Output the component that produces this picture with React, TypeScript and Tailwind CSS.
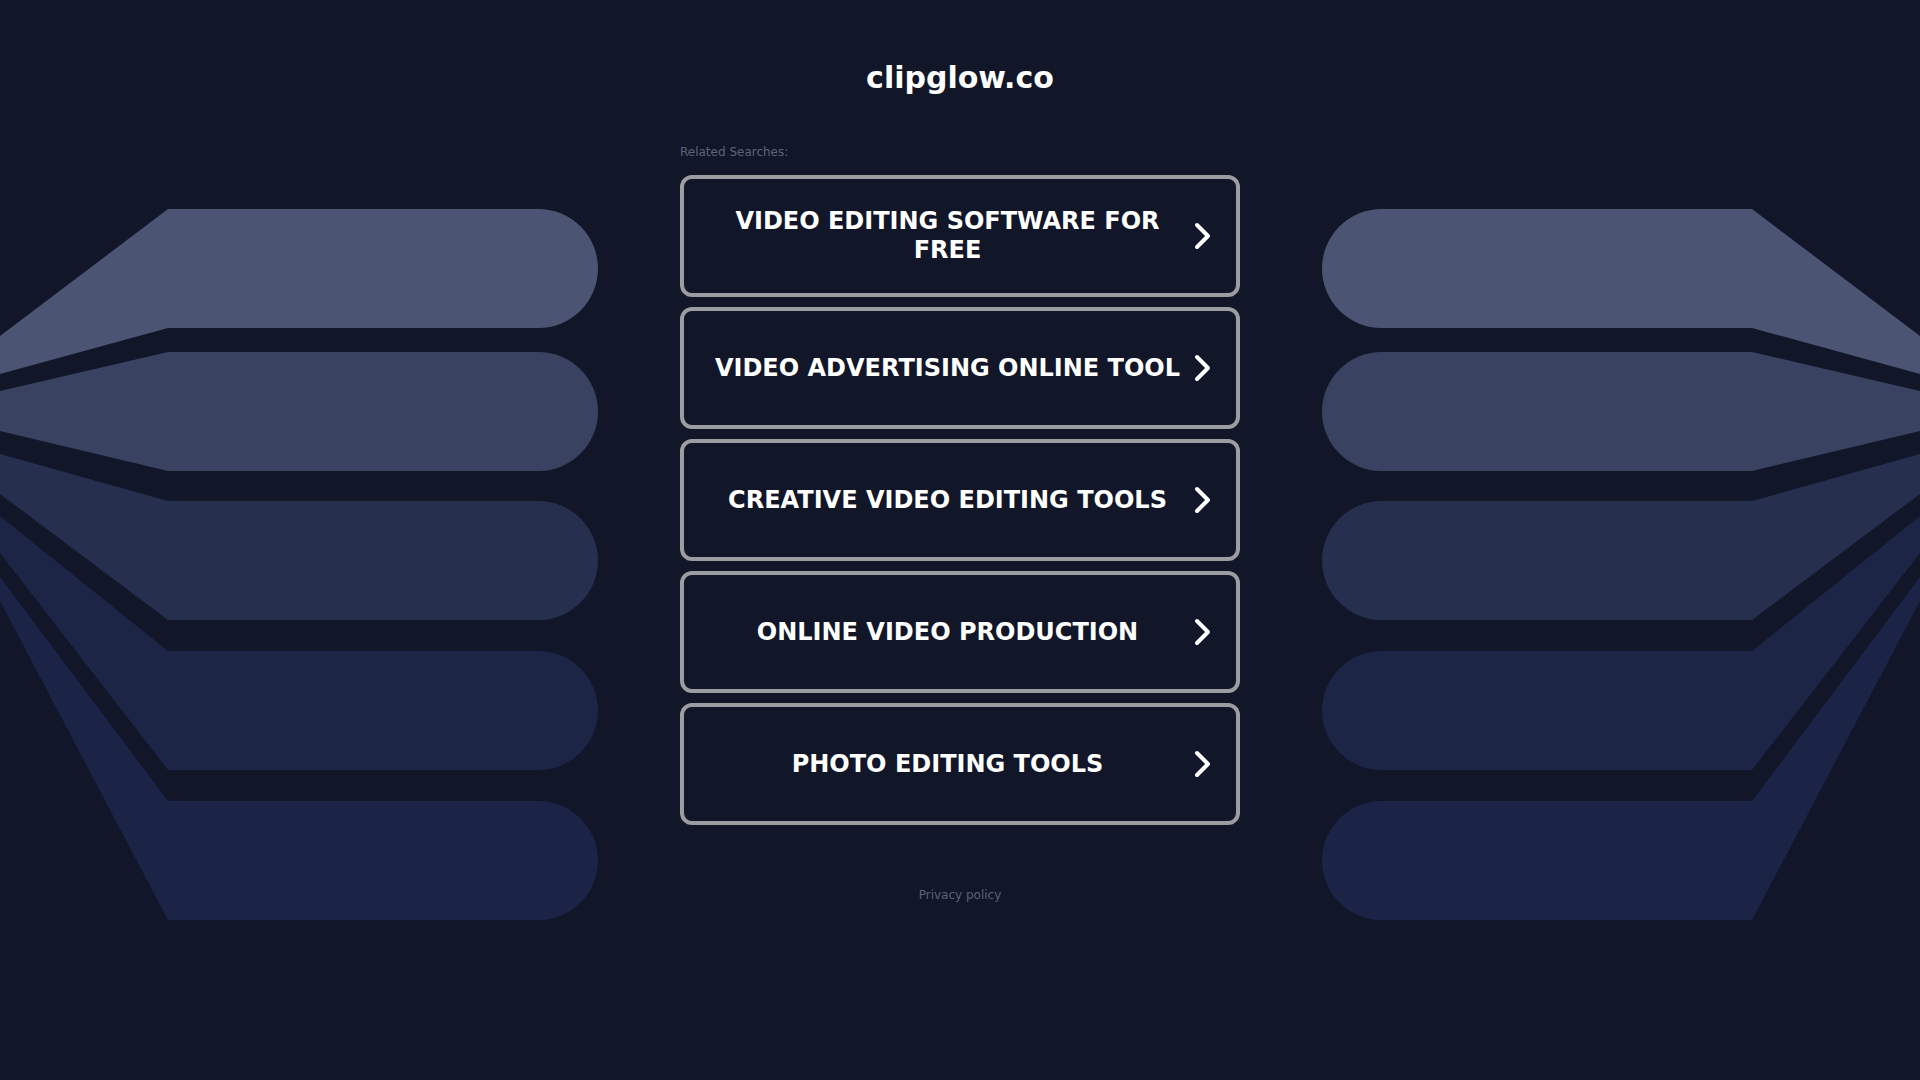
const searches = [
  "VIDEO EDITING SOFTWARE FOR FREE",
  "VIDEO ADVERTISING ONLINE TOOL",
  "CREATIVE VIDEO EDITING TOOLS",
  "ONLINE VIDEO PRODUCTION",
  "PHOTO EDITING TOOLS",
];

// band shapes: top/bottom of the straight part, and where the tail meets the page edge
const bands = [
  { top: 209, bottom: 328, edgeTop: 336, edgeBottom: 374, fill: "#4b5573" },
  { top: 352, bottom: 471, edgeTop: 391, edgeBottom: 431, fill: "#394361" },
  { top: 501, bottom: 620, edgeTop: 454, edgeBottom: 494, fill: "#262f4e" },
  { top: 651, bottom: 770, edgeTop: 516, edgeBottom: 553, fill: "#1c2545" },
  { top: 801, bottom: 920, edgeTop: 577, edgeBottom: 601, fill: "#1b2446" },
];

function Bands({ className }: { className?: string }) {
  return (
    <svg
      width="598"
      height="1080"
      viewBox="0 0 598 1080"
      className={"shrink-0 " + (className ?? "")}
    >
      {bands.map((b, i) => {
        const r = (b.bottom - b.top) / 2;
        return (
          <path
            key={i}
            fill={b.fill}
            d={`M168 ${b.top} H${598 - r} A${r} ${r} 0 0 1 ${598 - r} ${b.bottom} H168 L0 ${b.edgeBottom} V${b.edgeTop} Z`}
          />
        );
      })}
    </svg>
  );
}

function Chevron() {
  return (
    <svg width="20" height="28" viewBox="0 0 20 28" className="shrink-0 ml-[5px]">
      <polyline
        points="4,3 15,14 4,25"
        fill="none"
        stroke="#ffffff"
        strokeWidth="4"
        strokeLinecap="round"
        strokeLinejoin="round"
      />
    </svg>
  );
}

export default function App() {
  return (
    <div
      className="min-h-screen w-full bg-[#111629] flex justify-center overflow-hidden"
      style={{ fontFamily: '"DejaVu Sans", Verdana, sans-serif' }}
    >
      <Bands />

      <div className="w-[560px] shrink-0 mx-[82px] flex flex-col">
        <h1 className="pt-[60px] text-[30px] leading-[36px] font-bold text-white text-center">
          clipglow.co
        </h1>

        <div className="mt-[48px] text-[12px] leading-[16px] text-[#5d6478]">
          Related Searches:
        </div>

        <div className="mt-[15px] flex flex-col gap-[10px]">
          {searches.map((s) => (
            <a
              key={s}
              href="#"
              className="h-[122px] flex items-center border-4 border-[#9c9ca3] rounded-[12px] pl-[23px] pr-[23px]"
            >
              <span className="flex-1 text-center text-white font-bold text-[24px] leading-[29px]">
                {s}
              </span>
              <Chevron />
            </a>
          ))}
        </div>

        <div className="mt-[62px] text-center text-[12px] leading-[16px] text-[#5b6275]">
          Privacy policy
        </div>
      </div>

      <Bands className="-scale-x-100" />
    </div>
  );
}
